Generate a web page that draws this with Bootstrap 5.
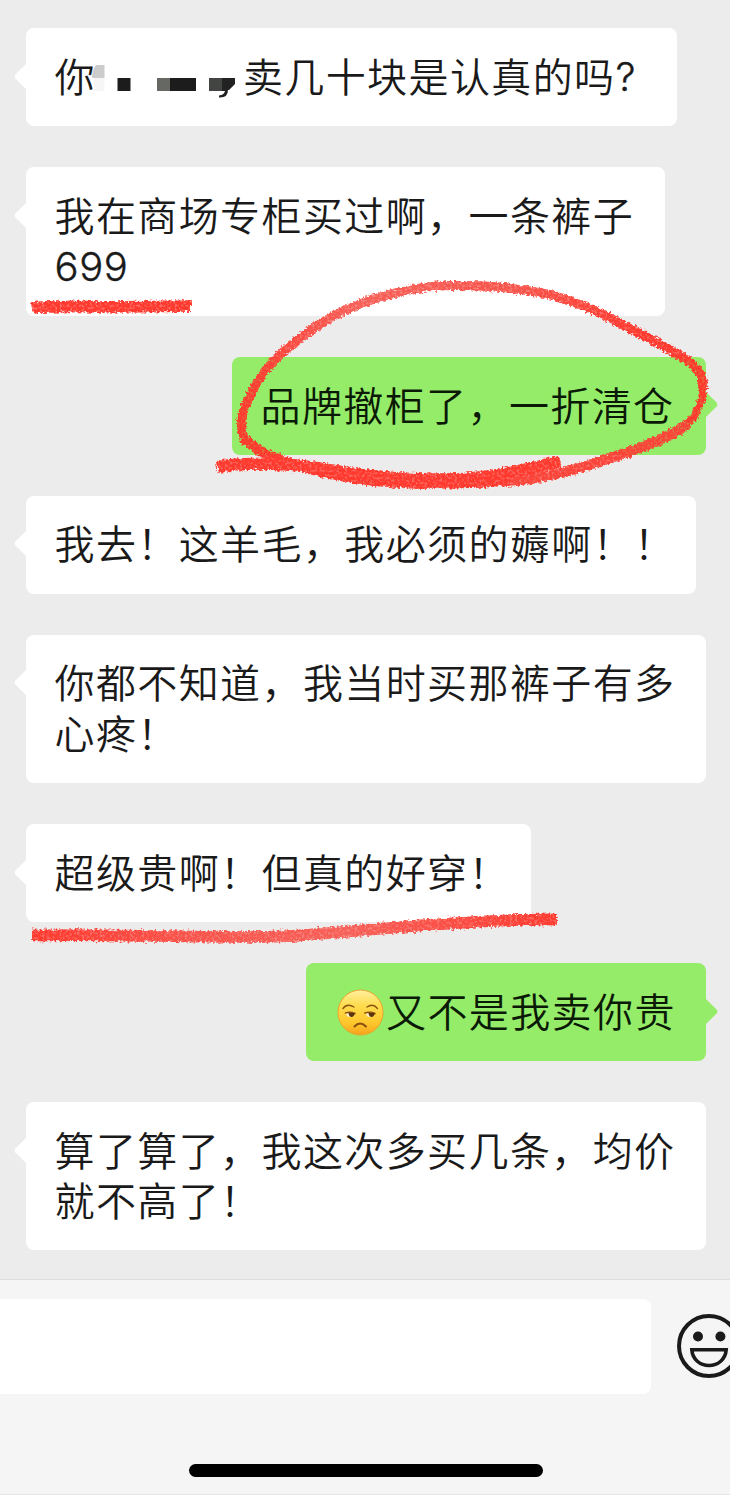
<!DOCTYPE html>
<html lang="zh-CN">
<head>
<meta charset="utf-8">
<meta name="viewport" content="width=device-width, initial-scale=1">
<title>聊天</title>
<link href="https://cdn.jsdelivr.net/npm/bootstrap@5.3.0/dist/css/bootstrap.min.css" rel="stylesheet">
<style>
  body { background: #ececec; color: #1a1a1a; font-family: Inter, "Noto Sans CJK SC", sans-serif; width: 730px; height: 1495px; }
  .chat { height: 1279px; padding: 28.4px 24px 0 26px; gap: 41.2px; }
  .bubble { background: #fff; border-radius: 8px; padding: 24.7px 0 22.6px 28.5px; font-size: 40px; line-height: 50.5px; letter-spacing: 1.4px; font-weight: 350; white-space: nowrap; }
  .bubble.mine { background: #95ec69; color: #0a1a06; }
  .num { letter-spacing: .6px; font-weight: 300; -webkit-text-stroke: .35px currentColor; position: relative; top: -1px; }
  .tip { top: 34.500px; width: 13px; height: 27px; left: -12px; fill: #fff; }
  .mine .tip { left: auto; right: -12px; fill: #95ec69; }
  .w1 { width: 651px; } .w2 { width: 639px; } .w3 { width: 474px; } .w4 { width: 670px; }
  .w5 { width: 680px; } .w6 { width: 505px; } .w7 { width: 400px; }
  .mosaic { width: 147px; height: 40px; vertical-align: top; margin-top: 4px; overflow: visible; }
  .face { width: 50px; height: 48px; vertical-align: top; margin-top: 0; margin-right: 1.5px; }
  .composer { height: 216px; background: #f5f5f5; border-top: 1px solid #dedede; border-bottom: 1px solid #e6e6e6; }
  .entry { width: 651px; height: 95.5px; margin-top: 18.5px; background: #fff; border-radius: 0 8px 8px 0; }
  .smile { width: 66px; height: 66px; margin: 33.3px 0 0 24.5px; }
  .homebar { width: 354.5px; height: 12.5px; margin: 0 0 17.5px 188.5px; background: #000; }
  .ink { pointer-events: none; }
</style>
</head>
<body class="position-relative overflow-hidden">
<main class="chat d-flex flex-column align-items-start">
  <div class="bubble position-relative w1"><svg class="tip position-absolute" viewBox="0 0 13 27"><path d="M13 0 1.2 11.7Q0 13.5 1.2 15.3L13 27z"/></svg>你<svg class="mosaic" viewBox="0 0 147 40"><path fill="#ccc" d="M0 8h8.500v13H-4Q-4 13 0 8z"/><path fill="#f6f6f6" d="M-2 21h10.500v13H-2z"/><path fill="#1c1c1c" d="M21.500 21h13v13h-13zM74 21h26v13H74z"/><path fill="#666864" d="M61 21h13v13H61z"/><path fill="#434543" d="M113 21h13v13h-13z"/><path fill="#222" d="M126 21h13v6l-6 6h-1Q132 41 123 40.500v-2Q128 38 129 34h-3z"/></svg>卖几十块是认真的吗<span class="num">?</span></div>
  <div class="bubble position-relative w2"><svg class="tip position-absolute" viewBox="0 0 13 27"><path d="M13 0 1.2 11.7Q0 13.5 1.2 15.3L13 27z"/></svg>我在商场专柜买过啊，一条裤子<br><span class="num">699</span></div>
  <div class="bubble mine position-relative align-self-end w3"><svg class="tip position-absolute" viewBox="0 0 13 27"><path d="M0 0 11.800 11.7Q13 13.5 11.800 15.3L0 27z"/></svg>品牌撤柜了，一折清仓</div>
  <div class="bubble position-relative w4"><svg class="tip position-absolute" viewBox="0 0 13 27"><path d="M13 0 1.2 11.7Q0 13.5 1.2 15.3L13 27z"/></svg>我去！这羊毛，我必须的薅啊！！</div>
  <div class="bubble position-relative w5"><svg class="tip position-absolute" viewBox="0 0 13 27"><path d="M13 0 1.2 11.7Q0 13.5 1.2 15.3L13 27z"/></svg>你都不知道，我当时买那裤子有多<br>心疼！</div>
  <div class="bubble position-relative w6"><svg class="tip position-absolute" viewBox="0 0 13 27"><path d="M13 0 1.2 11.7Q0 13.5 1.2 15.3L13 27z"/></svg>超级贵啊！但真的好穿！</div>
  <div class="bubble mine position-relative align-self-end w7"><svg class="tip position-absolute" viewBox="0 0 13 27"><path d="M0 0 11.800 11.7Q13 13.5 11.800 15.3L0 27z"/></svg><svg class="face" viewBox="0 0 50 48">
      <defs><linearGradient id="skin" x1="0" y1="0" x2="0" y2="1"><stop offset="0" stop-color="#fff0a0"/><stop offset=".35" stop-color="#ffdc4d"/><stop offset=".75" stop-color="#fec52b"/><stop offset="1" stop-color="#f5a21d"/></linearGradient></defs>
      <circle cx="25.500" cy="24.500" r="22.500" fill="url(#skin)" stroke="#eca52b" stroke-width="1"/>
      <g fill="none" stroke="#8a4f12" stroke-width="1.400" stroke-linecap="round"><path d="M8 20.500Q12 15 19 19M32 19Q38 15 42.500 20.500"/><path stroke-width="1.600" d="M10.500 25Q15 23.500 20 25.500M30 25Q35 23.500 40 25.500"/><path stroke-width="2" d="M19.500 38.500Q25 32.500 31 38.500"/></g>
      <path fill="#fff5d8" d="M11 25.500h8.500q-1.500 3.500-4.500 3.500T11 25.500zM31 25.500h8.500q-1.500 3.500-4.500 3.500T31 25.500z"/>
      <path fill="#5b3410" d="M13.500 25h6.500q-1 4-3.500 4t-3-4zM33.500 25h6.500q-1 4-3.500 4t-3-4z"/>
    </svg>又不是我卖你贵</div>
  <div class="bubble position-relative w5"><svg class="tip position-absolute" viewBox="0 0 13 27"><path d="M13 0 1.2 11.7Q0 13.5 1.2 15.3L13 27z"/></svg>算了算了，我这次多买几条，均价<br>就不高了！</div>
</main>
<footer class="composer d-flex flex-column justify-content-between">
  <div class="d-flex align-items-start">
    <div class="entry flex-shrink-0"></div>
    <svg class="smile flex-shrink-0" viewBox="0 0 66 66"><circle cx="33" cy="33" r="30" fill="none" stroke="#1a1a1a" stroke-width="4"/><circle cx="22" cy="23.500" r="5" fill="#1a1a1a"/><circle cx="44.400" cy="23.500" r="5" fill="#1a1a1a"/><path d="M15.800 36.700H50.200C49.500 46.500 42 52.500 33 52.500S16.500 46.500 15.800 36.700z" fill="none" stroke="#1a1a1a" stroke-width="3.600"/></svg>
  </div>
  <div class="homebar rounded-pill"></div>
</footer>
<!-- hand-drawn crayon marks lying over the conversation -->
<svg class="ink position-absolute top-0 start-0" width="730" height="1495" viewBox="0 0 730 1495">
  <defs>
    <filter id="crayon" filterUnits="userSpaceOnUse" x="0" y="260" width="730" height="700" color-interpolation-filters="sRGB">
      <feTurbulence type="fractalNoise" baseFrequency=".4" numOctaves="2" seed="4" result="n"/>
      <feDisplacementMap in="SourceGraphic" in2="n" scale="6" xChannelSelector="R" yChannelSelector="G" result="d"/>
      <feGaussianBlur in="d" stdDeviation=".6" result="b"/>
      <feColorMatrix in="n" type="matrix" values="0 0 0 0 0  0 0 0 0 0  0 0 0 0 0  0 0 4 0 -1.1" result="a"/>
      <feComposite in="b" in2="a" operator="in" result="g"/>
      <feComponentTransfer in="b" result="s"><feFuncA type="linear" slope=".75"/></feComponentTransfer>
      <feMerge><feMergeNode in="s"/><feMergeNode in="g"/></feMerge>
    </filter>
    <linearGradient id="fade" gradientUnits="userSpaceOnUse" x1="32" y1="0" x2="558" y2="0"><stop offset="0" stop-color="#ff392e"/><stop offset=".3" stop-color="#f9544b"/><stop offset=".6" stop-color="#f76058"/><stop offset="1" stop-color="#ff392e"/></linearGradient>
    <linearGradient id="loop" gradientUnits="userSpaceOnUse" x1="240" y1="0" x2="705" y2="0"><stop offset="0" stop-color="#ff392e"/><stop offset=".25" stop-color="#f76058"/><stop offset=".6" stop-color="#f8544b"/><stop offset=".85" stop-color="#ff392e"/></linearGradient>
  </defs>
  <g filter="url(#crayon)" fill="none" stroke="#ff392e" stroke-linejoin="round">
    <path stroke-width="11.500" d="M32 308Q45 306 80 306.500T191 306"/>
    <path stroke="url(#loop)" stroke-width="9" d="M246 442Q240 433 242 420Q243 408 250 396Q257 381 268 367Q282 351 302 337Q320 322 345 310Q372 298 400 292Q428 285 454 285.500Q505 285 552 295Q590 306 623 325Q650 338 674 352Q690 361 698 370Q705 378 702 390"/>
    <path stroke-width="7.500" d="M703 380Q704 398 698 409Q692 422 680 430"/>
    <path stroke="#fb4439" stroke-width="10" d="M688 424Q666 439 629 452Q598 463 565 472Q535 480 504 482"/>
    <path stroke-width="10" d="M244 438Q254 449 271 456Q295 466 325 473Q380 485 437 483.500Q475 484 510 480"/>
    <path stroke-width="12" d="M217 467Q240 463 268 464Q300 464 335 471Q375 478 416 479Q455 481 491 476Q525 471 560 461"/>
    <path stroke="url(#fade)" stroke-width="11.500" d="M32 935.500Q100 935 161 936T214 936.500Q270 938 306 935Q345 932 383 928.500T459 923Q510 919 557 919.500"/>
  </g>
</svg>
<script src="https://cdn.jsdelivr.net/npm/bootstrap@5.3.0/dist/js/bootstrap.bundle.min.js"></script>
</body>
</html>
